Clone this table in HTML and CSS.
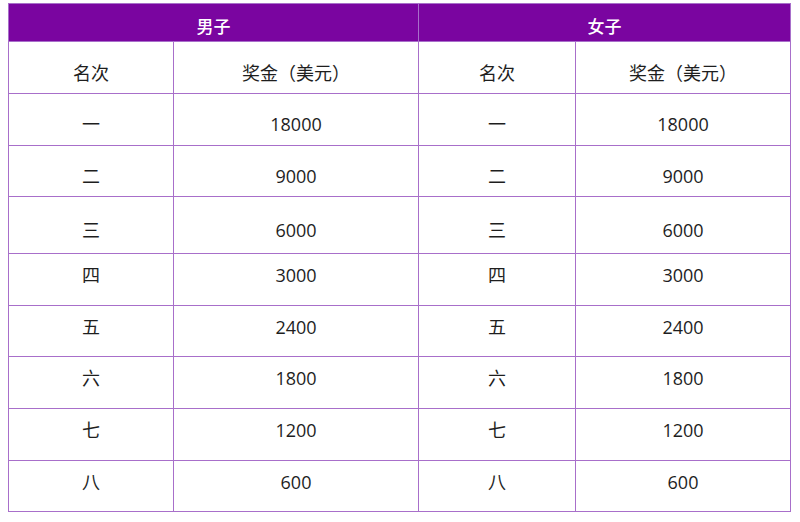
FILE: index.html
```html
<!DOCTYPE html>
<html lang="zh">
<head>
<meta charset="utf-8">
<link rel="stylesheet" href="styles.css">
</head>
<body>
<table class="prize">
  <colgroup>
    <col class="c1"><col class="c2"><col class="c3"><col class="c4">
  </colgroup>
  <thead>
    <tr class="group">
      <th colspan="2">男子</th>
      <th colspan="2">女子</th>
    </tr>
  </thead>
  <tbody>
    <tr class="sub"><td>名次</td><td>奖金（美元）</td><td>名次</td><td>奖金（美元）</td></tr>
    <tr class="r52 low"><td>一</td><td>18000</td><td>一</td><td>18000</td></tr>
    <tr class="r51 low"><td>二</td><td>9000</td><td>二</td><td>9000</td></tr>
    <tr class="r57 low"><td>三</td><td>6000</td><td>三</td><td>6000</td></tr>
    <tr class="r52 high"><td>四</td><td>3000</td><td>四</td><td>3000</td></tr>
    <tr class="r51 high"><td>五</td><td>2400</td><td>五</td><td>2400</td></tr>
    <tr class="r52 high"><td>六</td><td>1800</td><td>六</td><td>1800</td></tr>
    <tr class="r52 high"><td>七</td><td>1200</td><td>七</td><td>1200</td></tr>
    <tr class="r51 high"><td>八</td><td>600</td><td>八</td><td>600</td></tr>
  </tbody>
</table>
</body>
</html>
```

FILE: styles.css
```css
html, body {
  margin: 0;
  padding: 0;
  background: #ffffff;
}

body {
  font-family: "Open Sans", "Noto Sans CJK SC", sans-serif;
  color: #1e1e1e;
}

.prize {
  margin: 3px 0 0 8px;
  width: 782px;
  table-layout: fixed;
  border-collapse: collapse;
}

.c1 { width: 165px; }
.c2 { width: 245px; }
.c3 { width: 157px; }
.c4 { width: 215px; }

.prize th,
.prize td {
  border: 1px solid #a86fca;
  text-align: center;
  vertical-align: middle;
  padding: 7px 0 0;
  line-height: 1;
}

.prize th {
  background: #7a05a0;
  color: #ffffff;
  font-size: 17px;
  font-weight: 500;
  height: 38px;
  box-sizing: border-box;
}

.prize td {
  font-size: 18px;
  box-sizing: border-box;
}

.sub td { height: 52px; padding-top: 10px; }
.r52 td { height: 52px; }
.r51 td { height: 51px; }
.r57 td { height: 57px; }

.low td { padding: 9px 0 0; }
.high td { padding: 0 0 9px; }
```
